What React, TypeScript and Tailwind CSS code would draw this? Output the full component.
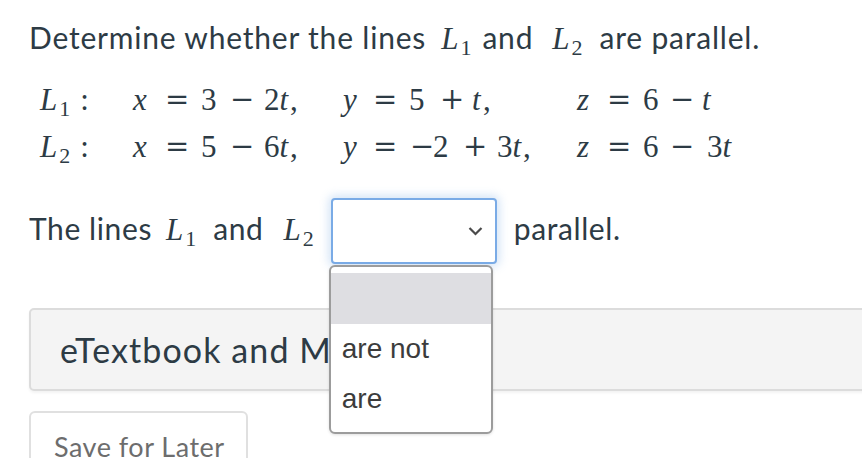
import React from 'react';

// tiny math helpers – serif italic letters, DejaVu for operators
const V: React.FC<{ children: React.ReactNode }> = ({ children }) => (
  <span className="italic">{children}</span>
);

const Ln: React.FC<{ n: string }> = ({ n }) => (
  <span className="font-['Liberation_Serif',serif] text-[31px] whitespace-nowrap">
    <span className="italic">L</span>
    <span className="relative top-[6px] ml-[2px] text-[22px] leading-none">{n}</span>
  </span>
);

type Tok = { t: string; w: number; op?: boolean };

const Cell: React.FC<{ toks: Tok[] }> = ({ toks }) => (
  <div className="flex whitespace-nowrap">
    {toks.map((k, i) => (
      <span
        key={i}
        className={k.op ? "inline-block shrink-0 font-['DejaVu_Serif',serif] text-[29px]" : 'inline-block shrink-0'}
        style={{ width: k.w }}
      >
        {k.op ? k.t : k.t.split(/(t|x|y|z)/).map((p, j) =>
          /^(t|x|y|z)$/.test(p) ? <V key={j}>{p}</V> : <span key={j}>{p}</span>
        )}
      </span>
    ))}
  </div>
);

const rows: { n: string; x: Tok[]; y: Tok[]; z: Tok[] }[] = [
  {
    n: '1',
    x: [{ t: 'x', w: 32 }, { t: '=', w: 36, op: true }, { t: '3', w: 29 }, { t: '\u2212', w: 34, op: true }, { t: '2t', w: 26 }, { t: ',', w: 10 }],
    y: [{ t: 'y', w: 30 }, { t: '=', w: 36, op: true }, { t: '5', w: 31 }, { t: '+', w: 32, op: true }, { t: 't', w: 11 }, { t: ',', w: 10 }],
    z: [{ t: 'z', w: 30 }, { t: '=', w: 36, op: true }, { t: '6', w: 27 }, { t: '\u2212', w: 32, op: true }, { t: 't', w: 20 }],
  },
  {
    n: '2',
    x: [{ t: 'x', w: 32 }, { t: '=', w: 36, op: true }, { t: '5', w: 29 }, { t: '\u2212', w: 34, op: true }, { t: '6t', w: 26 }, { t: ',', w: 10 }],
    y: [{ t: 'y', w: 30 }, { t: '=', w: 37, op: true }, { t: '\u2212', w: 23, op: true }, { t: '2', w: 30 }, { t: '+', w: 34, op: true }, { t: '3t', w: 26 }, { t: ',', w: 10 }],
    z: [{ t: 'z', w: 30 }, { t: '=', w: 36, op: true }, { t: '6', w: 27 }, { t: '\u2212', w: 37, op: true }, { t: '3t', w: 34 }],
  },
];

export default function App() {
  return (
    <div className="h-[458px] overflow-hidden bg-white text-[#2d3b45] font-['Lato','Noto_Sans',sans-serif] pl-[29px] pt-[17px]">
      <p className="h-[40px] text-[30px] leading-[40px] tracking-[0.8px] whitespace-nowrap">
        Determine whether the lines
        <span className="inline-block ml-[15px] tracking-normal"><Ln n="1" /></span>
        <span className="ml-[11px]">and</span>
        <span className="inline-block ml-[19px] tracking-normal"><Ln n="2" /></span>
        <span className="ml-[17px]">are parallel.</span>
      </p>

      <div className="mt-[19px] ml-[11px] grid grid-cols-[93px_210px_234px_auto] grid-rows-[47px_47px] font-['Liberation_Serif',serif] text-[31px] leading-[47px]">
        {rows.map(r => (
          <React.Fragment key={r.n}>
            <div className="whitespace-nowrap">
              <span className="italic">L</span>
              <span className="relative top-[6px] ml-[2px] text-[22px] leading-none">{r.n}</span>
              <span className="ml-[10px]">:</span>
            </div>
            <Cell toks={r.x} />
            <Cell toks={r.y} />
            <Cell toks={r.z} />
          </React.Fragment>
        ))}
      </div>

      <div className="mt-[28px] h-[66px] flex items-start whitespace-nowrap text-[30px] leading-[40px]">
        <span className="mt-[10px] tracking-[0.6px]">The lines</span>
        <span className="mt-[10px] ml-[14px]"><Ln n="1" /></span>
        <span className="mt-[10px] ml-[17px] tracking-[0.6px]">and</span>
        <span className="mt-[10px] ml-[20px]"><Ln n="2" /></span>
        <div className="relative ml-[17px]">
          <div className="w-[166px] h-[66px] rounded-[4px] border-2 border-[#7aabe6] shadow-[0_0_8px_3px_rgba(122,171,230,0.3)] bg-white flex items-center justify-end pr-[12px]">
            <svg width="15" height="10" viewBox="0 0 15 10" fill="none">
              <path d="M1.5 2 L7.5 8 L13.5 2" stroke="#4a4a4a" strokeWidth="2.2" />
            </svg>
          </div>
          <div className="absolute left-[-2px] top-[67px] w-[164px] h-[169px] z-10 rounded-[6px] border-2 border-[#9c9c9c] bg-white pt-[6px] font-['Liberation_Sans',Arial,sans-serif] text-[28px] text-[#3c3c3c] shadow-[0_1px_3px_rgba(0,0,0,0.12)] overflow-hidden">
            <div className="h-[51px] bg-[#dedee2]" />
            <div className="h-[50px] leading-[50px] pl-[11px]">are not</div>
            <div className="h-[50px] leading-[50px] pl-[11px]">are</div>
          </div>
        </div>
        <span className="mt-[10px] ml-[17px] tracking-[0.6px]">parallel.</span>
      </div>

      <div className="mt-[44px] h-[83px] mr-[-20px] rounded-[5px] border-2 border-[#dcdcdc] bg-[#f4f4f4] shadow-[0_2px_3px_rgba(0,0,0,0.05)] flex items-center pl-[29px]">
        <span className="text-[34px] leading-[40px] tracking-[1.1px] whitespace-nowrap">eTextbook and Media</span>
      </div>

      <div className="mt-[20px] w-[219px] h-[70px] rounded-[6px] border-2 border-[#e0e0e0] bg-white pt-[20px] pl-[23px]">
        <span className="block text-[27px] leading-[27px] tracking-[0.5px] text-[#6d6d6d] whitespace-nowrap">Save for Later</span>
      </div>
    </div>
  );
}
